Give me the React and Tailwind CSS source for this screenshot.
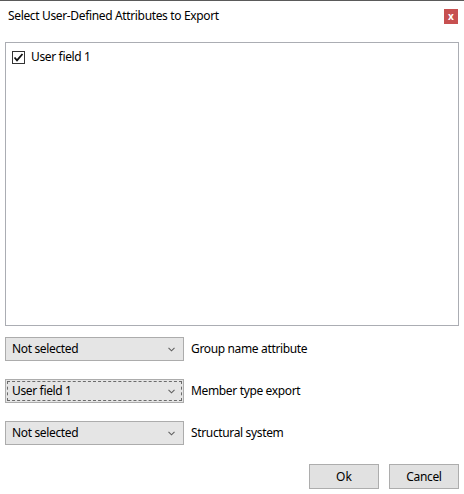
import { useState } from 'react';

const FONT = { fontFamily: '"Segoe UI", "Noto Sans", "Open Sans", sans-serif' };

function Chevron() {
  return (
    <svg width="7" height="5" viewBox="0 0 7 5" className="shrink-0 mr-[2px]">
      <path d="M0.5 0.8l3 3 3-3" fill="none" stroke="#606060" strokeWidth="1.1" />
    </svg>
  );
}

function Combo({ value, label, focused }) {
  return (
    <div className="flex items-center h-[24px]">
      <div className="w-[179px] h-full border border-[#acacac] bg-[#e5e5e5] p-[1px]">
        <div
          className={
            'flex items-center h-full pl-[4px] pr-[4px] ' +
            (focused ? 'border border-dashed border-[#6b6b6b]' : 'border border-transparent')
          }
        >
          <span className="flex-1 text-[12px] tracking-[-0.35px] text-black leading-none">{value}</span>
          <Chevron />
        </div>
      </div>
      <span className="ml-[7px] text-[12px] tracking-[-0.35px] text-black leading-none">{label}</span>
    </div>
  );
}

export default function App() {
  const [checked, setChecked] = useState(true);

  return (
    <div className="w-[464px] h-[494px] bg-white border-t border-[#5a5a5a] relative" style={FONT}>
      {/* Title bar */}
      <div className="flex items-center justify-between h-[30px] pl-[8px] pr-[6px]">
        <span className="text-[12px] tracking-[-0.35px] text-black">Select User-Defined Attributes to Export</span>
        <button className="w-[14px] h-[15px] bg-[#c75050] flex items-center justify-center text-white text-[10px] font-bold leading-none">
          x
        </button>
      </div>

      {/* Attribute list */}
      <div className="mx-[5px] mt-[11px] h-[284px] border border-[#abadb3] bg-white pt-[5px] pl-[6px]">
        <label className="flex items-center gap-[6px] cursor-default">
          <span
            onClick={() => setChecked(!checked)}
            className="w-[13px] h-[13px] border border-[#333] bg-white flex items-center justify-center"
          >
            {checked && (
              <svg width="11" height="11" viewBox="0 0 11 11">
                <path d="M1.5 5.5l2.5 2.8L9.5 2" fill="none" stroke="#111" strokeWidth="1.8" />
              </svg>
            )}
          </span>
          <span className="text-[12px] tracking-[-0.35px] text-black">User field 1</span>
        </label>
      </div>

      {/* Export options */}
      <div className="flex flex-col gap-[18px] px-[5px] mt-[11px]">
        <Combo value="Not selected" label="Group name attribute" />
        <Combo value="User field 1" label="Member type export" focused />
        <Combo value="Not selected" label="Structural system" />
      </div>

      {/* Actions */}
      <div className="flex justify-end gap-[10px] pr-[5px] mt-[19px]">
        <button className="w-[70px] h-[25px] bg-[#e1e1e1] border border-[#adadad] text-[12px] text-black">Ok</button>
        <button className="w-[70px] h-[25px] bg-[#e1e1e1] border border-[#adadad] text-[12px] tracking-[-0.35px] text-black">Cancel</button>
      </div>
    </div>
  );
}
